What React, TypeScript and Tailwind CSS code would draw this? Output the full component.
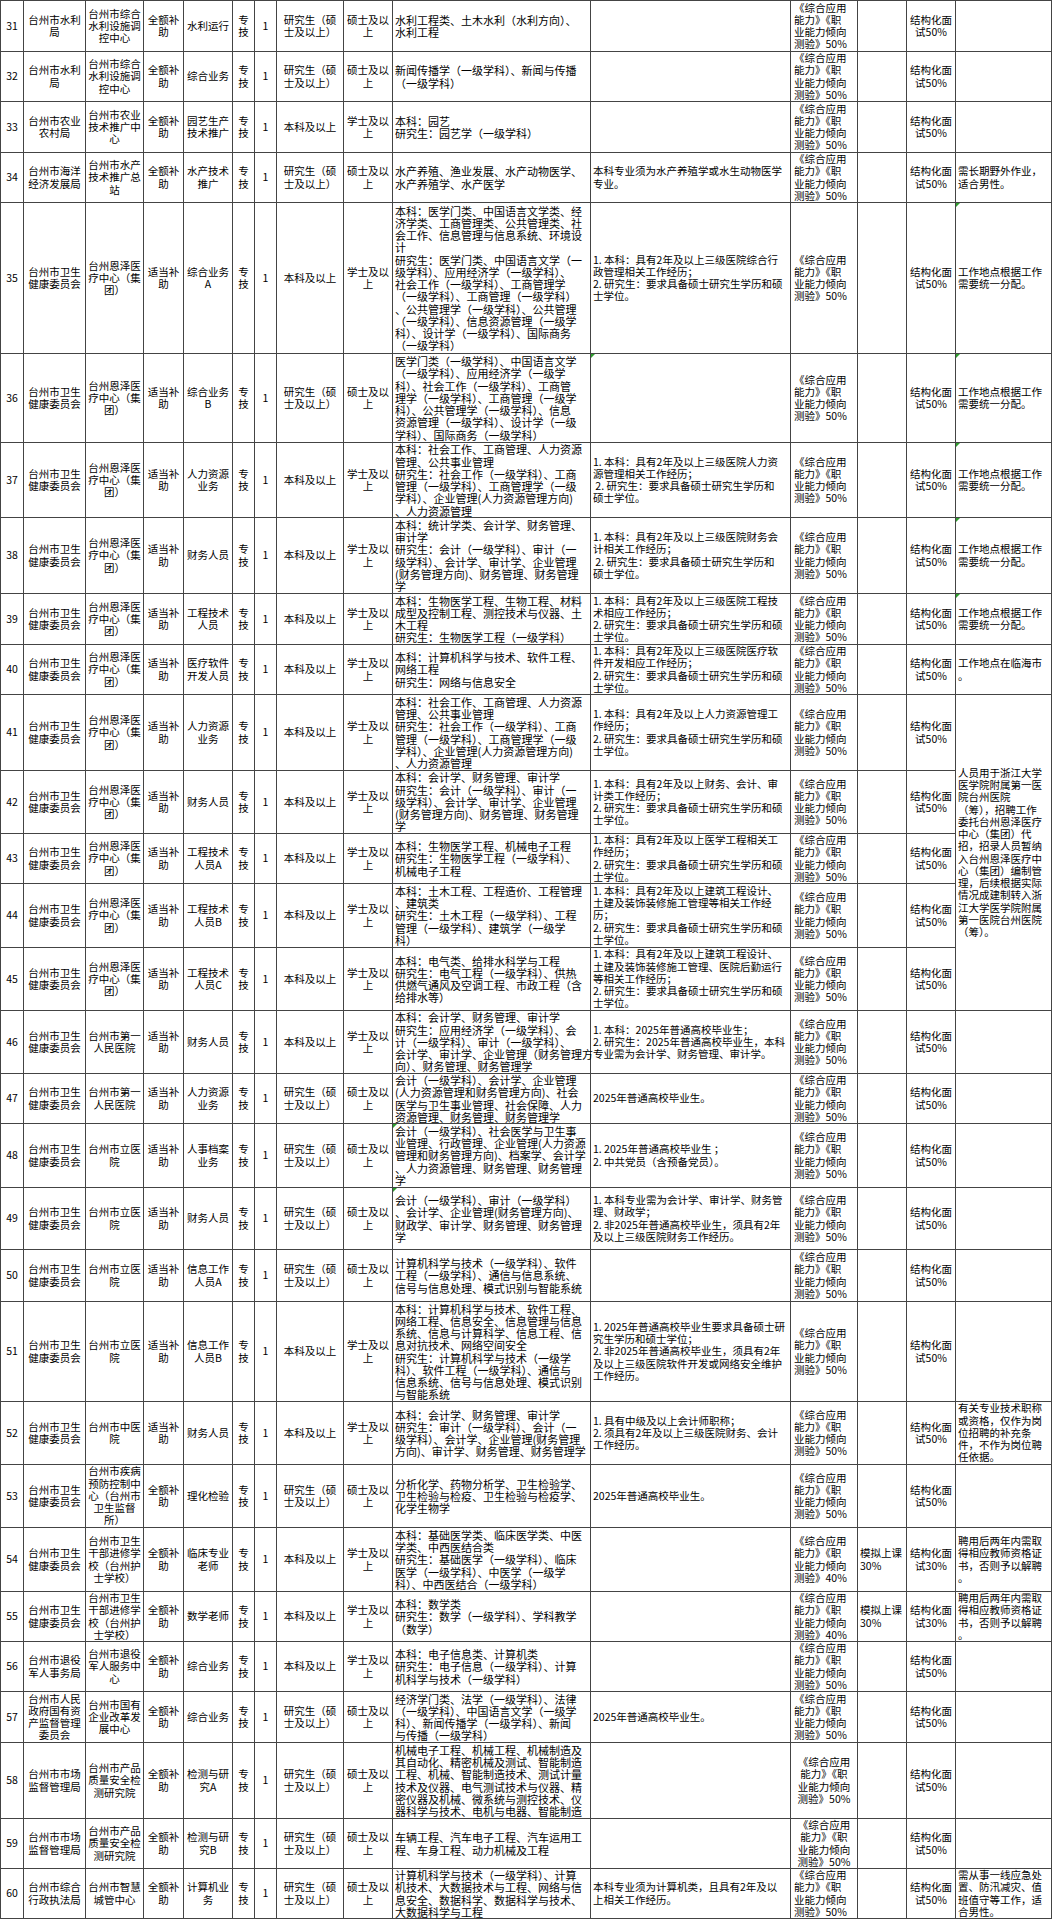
import React from 'react';

type Row = {
  n: number;
  dept: string;
  unit: string;
  fund: string;
  post: string;
  grad: boolean;
  major: string;
  cond?: string;
  exam?: string;
  examCenter?: boolean;
  sim?: string;
  interview?: string;
  note?: string;
  noteSpan?: boolean;
  skipNote?: boolean;
};

const WJ = '台州市卫生\n健康委员会';
const EZ = '台州恩泽医\n疗中心（集\n团）';
const LY = '台州市立医\n院';
const DY = '台州市第一\n人民医院';
const NURSE = '台州市卫生\n干部进修学\n校（台州护\n士学校）';
const PQ = '台州市产品\n质量安全检\n测研究院';
const SC = '台州市市场\n监督管理局';
const FULL = '全额补\n助';
const PART = '适当补\n助';
const WORK = '工作地点根据工作\n需要统一分配。';
const GRAD = '2025年普通高校毕业生。';
const TEACH = '聘用后两年内需取\n得相应教师资格证\n书，否则予以解聘\n。';
const EXAM50 = '《综合应用\n能力》《职\n业能力倾向\n测验》50%';
const EXAM40 = '《综合应用\n能力》《职\n业能力倾向\n测验》40%';
const HR_MAJOR =
  '本科：社会工作、工商管理、人力资源\n管理、公共事业管理\n研究生：社会工作（一级学科）、工商\n管理（一级学科）、工商管理学（一级\n学科）、企业管理(人力资源管理方向)\n、人力资源管理';

const rows: Row[] = [
  { n: 31, dept: '台州市水利\n局', unit: '台州市综合\n水利设施调\n控中心', fund: FULL, post: '水利运行', grad: true, major: '水利工程类、土木水利（水利方向）、\n水利工程' },
  { n: 32, dept: '台州市水利\n局', unit: '台州市综合\n水利设施调\n控中心', fund: FULL, post: '综合业务', grad: true, major: '新闻传播学（一级学科）、新闻与传播\n（一级学科）' },
  { n: 33, dept: '台州市农业\n农村局', unit: '台州市农业\n技术推广中\n心', fund: FULL, post: '园艺生产\n技术推广', grad: false, major: '本科：园艺\n研究生：园艺学（一级学科）' },
  {
    n: 34, dept: '台州市海洋\n经济发展局', unit: '台州市水产\n技术推广总\n站', fund: FULL, post: '水产技术\n推广', grad: true,
    major: '水产养殖、渔业发展、水产动物医学、\n水产养殖学、水产医学',
    cond: '本科专业须为水产养殖学或水生动物医学\n专业。',
    note: '需长期野外作业，\n适合男性。',
  },
  {
    n: 35, dept: WJ, unit: EZ, fund: PART, post: '综合业务\nA', grad: false,
    major:
      '本科：医学门类、中国语言文学类、经\n济学类、工商管理类、公共管理类、社\n会工作、信息管理与信息系统、环境设\n计\n研究生：医学门类、中国语言文学（一\n级学科）、应用经济学（一级学科）、\n社会工作（一级学科）、工商管理学\n（一级学科）、工商管理（一级学科）\n、公共管理学（一级学科）、公共管理\n（一级学科）、信息资源管理（一级学\n科）、设计学（一级学科）、国际商务\n（一级学科）',
    cond: '1. 本科：具有2年及以上三级医院综合行\n政管理相关工作经历；\n2. 研究生：要求具备硕士研究生学历和硕\n士学位。',
    note: WORK,
  },
  {
    n: 36, dept: WJ, unit: EZ, fund: PART, post: '综合业务\nB', grad: true,
    major:
      '医学门类（一级学科）、中国语言文学\n（一级学科）、应用经济学（一级学\n科）、社会工作（一级学科）、工商管\n理学（一级学科）、工商管理（一级学\n科）、公共管理学（一级学科）、信息\n资源管理（一级学科）、设计学（一级\n学科）、国际商务（一级学科）',
    note: WORK,
  },
  {
    n: 37, dept: WJ, unit: EZ, fund: PART, post: '人力资源\n业务', grad: false, major: HR_MAJOR,
    cond: '1. 本科：具有2年及以上三级医院人力资\n源管理相关工作经历；\n 2. 研究生：要求具备硕士研究生学历和\n硕士学位。',
    note: WORK,
  },
  {
    n: 38, dept: WJ, unit: EZ, fund: PART, post: '财务人员', grad: false,
    major: '本科：统计学类、会计学、财务管理、\n审计学\n研究生：会计（一级学科）、审计（一\n级学科）、会计学、审计学、企业管理\n(财务管理方向)、财务管理、财务管理\n学',
    cond: '1. 本科：具有2年及以上三级医院财务会\n计相关工作经历；\n 2. 研究生：要求具备硕士研究生学历和\n硕士学位。',
    note: WORK,
  },
  {
    n: 39, dept: WJ, unit: EZ, fund: PART, post: '工程技术\n人员', grad: false,
    major: '本科：生物医学工程、生物工程、材料\n成型及控制工程、测控技术与仪器、土\n木工程\n研究生：生物医学工程（一级学科）',
    cond: '1. 本科：具有2年及以上三级医院工程技\n术相应工作经历；\n2. 研究生：要求具备硕士研究生学历和硕\n士学位。',
    note: WORK,
  },
  {
    n: 40, dept: WJ, unit: EZ, fund: PART, post: '医疗软件\n开发人员', grad: false,
    major: '本科：计算机科学与技术、软件工程、\n网络工程\n研究生：网络与信息安全',
    cond: '1. 本科：具有2年及以上三级医院医疗软\n件开发相应工作经历；\n2. 研究生：要求具备硕士研究生学历和硕\n士学位。',
    note: '工作地点在临海市\n。',
  },
  {
    n: 41, dept: WJ, unit: EZ, fund: PART, post: '人力资源\n业务', grad: false, major: HR_MAJOR,
    cond: '1. 本科：具有2年及以上人力资源管理工\n作经历；\n2. 研究生：要求具备硕士研究生学历和硕\n士学位。',
    note:
      '人员用于浙江大学\n医学院附属第一医\n院台州医院\n（筹），招聘工作\n委托台州恩泽医疗\n中心（集团）代\n招，招录人员暂纳\n入台州恩泽医疗中\n心（集团）编制管\n理，后续根据实际\n情况成建制转入浙\n江大学医学院附属\n第一医院台州医院\n（筹）。',
    noteSpan: true,
  },
  {
    n: 42, dept: WJ, unit: EZ, fund: PART, post: '财务人员', grad: false,
    major: '本科：会计学、财务管理、审计学\n研究生：会计（一级学科）、审计（一\n级学科）、会计学、审计学、企业管理\n(财务管理方向)、财务管理、财务管理\n学',
    cond: '1. 本科：具有2年及以上财务、会计、审\n计类工作经历；\n2. 研究生：要求具备硕士研究生学历和硕\n士学位。',
    skipNote: true,
  },
  {
    n: 43, dept: WJ, unit: EZ, fund: PART, post: '工程技术\n人员A', grad: false,
    major: '本科：生物医学工程、机械电子工程\n研究生：生物医学工程（一级学科）、\n机械电子工程',
    cond: '1. 本科：具有2年及以上医学工程相关工\n作经历；\n2. 研究生：要求具备硕士研究生学历和硕\n士学位。',
    skipNote: true,
  },
  {
    n: 44, dept: WJ, unit: EZ, fund: PART, post: '工程技术\n人员B', grad: false,
    major: '本科：土木工程、工程造价、工程管理\n、建筑类\n研究生：土木工程（一级学科）、工程\n管理（一级学科）、建筑学（一级学\n科）',
    cond: '1. 本科：具有2年及以上建筑工程设计、\n土建及装饰装修施工管理等相关工作经\n历；\n2. 研究生：要求具备硕士研究生学历和硕\n士学位。',
    skipNote: true,
  },
  {
    n: 45, dept: WJ, unit: EZ, fund: PART, post: '工程技术\n人员C', grad: false,
    major: '本科：电气类、给排水科学与工程\n研究生：电气工程（一级学科）、供热\n供燃气通风及空调工程、市政工程（含\n给排水等）',
    cond: '1. 本科：具有2年及以上建筑工程设计、\n土建及装饰装修施工管理、医院后勤运行\n等相关工作经历；\n2. 研究生：要求具备硕士研究生学历和硕\n士学位。',
    skipNote: true,
  },
  {
    n: 46, dept: WJ, unit: DY, fund: PART, post: '财务人员', grad: false,
    major: '本科：会计学、财务管理、审计学\n研究生：应用经济学（一级学科）、会\n计（一级学科）、审计（一级学科）、\n会计学、审计学、企业管理（财务管理方\n向）、财务管理、财务管理学',
    cond: '1. 本科：2025年普通高校毕业生；\n2. 研究生：2025年普通高校毕业生，本科\n专业需为会计学、财务管理、审计学。',
  },
  {
    n: 47, dept: WJ, unit: DY, fund: PART, post: '人力资源\n业务', grad: true,
    major: '会计（一级学科）、会计学、企业管理\n(人力资源管理和财务管理方向)、社会\n医学与卫生事业管理、社会保障、人力\n资源管理、财务管理、财务管理学',
    cond: GRAD,
  },
  {
    n: 48, dept: WJ, unit: LY, fund: PART, post: '人事档案\n业务', grad: true,
    major: '会计（一级学科）、社会医学与卫生事\n业管理、行政管理、企业管理(人力资源\n管理和财务管理方向)、档案学、会计学\n、人力资源管理、财务管理、财务管理\n学',
    cond: '1. 2025年普通高校毕业生 ；\n2. 中共党员（含预备党员）。',
  },
  {
    n: 49, dept: WJ, unit: LY, fund: PART, post: '财务人员', grad: true,
    major: '会计（一级学科）、审计（一级学科）\n、会计学、企业管理(财务管理方向)、\n财政学、审计学、财务管理、财务管理\n学',
    cond: '1. 本科专业需为会计学、审计学、财务管\n理、财政学；\n2. 非2025年普通高校毕业生，须具有2年\n及以上三级医院财务工作经历。',
  },
  {
    n: 50, dept: WJ, unit: LY, fund: PART, post: '信息工作\n人员A', grad: true,
    major: '计算机科学与技术（一级学科）、软件\n工程（一级学科）、通信与信息系统、\n信号与信息处理、模式识别与智能系统',
  },
  {
    n: 51, dept: WJ, unit: LY, fund: PART, post: '信息工作\n人员B', grad: false,
    major: '本科：计算机科学与技术、软件工程、\n网络工程、信息安全、信息管理与信息\n系统、信息与计算科学、信息工程、信\n息对抗技术、网络空间安全\n研究生：计算机科学与技术（一级学\n科）、软件工程（一级学科）、通信与\n信息系统、信号与信息处理、模式识别\n与智能系统',
    cond: '1. 2025年普通高校毕业生要求具备硕士研\n究生学历和硕士学位；\n2. 非2025年普通高校毕业生，须具有2年\n及以上三级医院软件开发或网络安全维护\n工作经历。',
  },
  {
    n: 52, dept: WJ, unit: '台州市中医\n院', fund: PART, post: '财务人员', grad: false,
    major: '本科：会计学、财务管理、审计学\n研究生：审计（一级学科）、会计（一\n级学科）、会计学、企业管理(财务管理\n方向)、审计学、财务管理、财务管理学',
    cond: '1. 具有中级及以上会计师职称；\n2. 须具有2年及以上三级医院财务、会计\n工作经历。',
    note: '有关专业技术职称\n或资格，仅作为岗\n位招聘的补充条\n件，不作为岗位聘\n任依据。',
  },
  {
    n: 53, dept: WJ, unit: '台州市疾病\n预防控制中\n心（台州市\n卫生监督\n所）', fund: FULL, post: '理化检验', grad: true,
    major: '分析化学、药物分析学、卫生检验学、\n卫生检验与检疫、卫生检验与检疫学、\n化学生物学',
    cond: GRAD,
  },
  {
    n: 54, dept: WJ, unit: NURSE, fund: FULL, post: '临床专业\n老师', grad: false,
    major: '本科：基础医学类、临床医学类、中医\n学类、中西医结合类\n研究生：基础医学（一级学科）、临床\n医学（一级学科）、中医学（一级学\n科）、中西医结合（一级学科）',
    exam: EXAM40, sim: '模拟上课\n30%', interview: '结构化面\n试30%', note: TEACH,
  },
  {
    n: 55, dept: WJ, unit: NURSE, fund: FULL, post: '数学老师', grad: false,
    major: '本科：数学类\n研究生：数学（一级学科）、学科教学\n（数学）',
    exam: EXAM40, sim: '模拟上课\n30%', interview: '结构化面\n试30%', note: TEACH,
  },
  {
    n: 56, dept: '台州市退役\n军人事务局', unit: '台州市退役\n军人服务中\n心', fund: FULL, post: '综合业务', grad: false,
    major: '本科：电子信息类、计算机类\n研究生：电子信息（一级学科）、计算\n机科学与技术（一级学科）',
  },
  {
    n: 57, dept: '台州市人民\n政府国有资\n产监督管理\n委员会', unit: '台州市国有\n企业改革发\n展中心', fund: FULL, post: '综合业务', grad: true,
    major: '经济学门类、法学（一级学科）、法律\n（一级学科）、中国语言文学（一级学\n科）、新闻传播学（一级学科）、新闻\n与传播（一级学科）',
    cond: GRAD,
  },
  {
    n: 58, dept: SC, unit: PQ, fund: FULL, post: '检测与研\n究A', grad: true,
    major: '机械电子工程、机械工程、机械制造及\n其自动化、精密机械及测试、智能制造\n工程、机械、智能制造技术、测试计量\n技术及仪器、电气测试技术与仪器、精\n密仪器及机械、微系统与测控技术、仪\n器科学与技术、电机与电器、智能制造',
    examCenter: true,
  },
  {
    n: 59, dept: SC, unit: PQ, fund: FULL, post: '检测与研\n究B', grad: true,
    major: '车辆工程、汽车电子工程、汽车运用工\n程、车身工程、动力机械及工程',
    examCenter: true,
  },
  {
    n: 60, dept: '台州市综合\n行政执法局', unit: '台州市智慧\n城管中心', fund: FULL, post: '计算机业\n务', grad: true,
    major: '计算机科学与技术（一级学科）、计算\n机技术、大数据技术与工程、网络与信\n息安全、数据科学、数据科学与技术、\n大数据科学与工程',
    cond: '本科专业须为计算机类，且具有2年及以\n上相关工作经历。',
    note: '需从事一线应急处\n置、防汛减灾、值\n班值守等工作，适\n合男性。',
  },
];

// little green comment corners, row-column
const marks = new Set(['35-14', '36-10', '36-14', '37-14', '38-14', '39-14', '48-9', '49-9']);

function Cell({
  text,
  left,
  pad = 'pl-[2px]',
  big,
  mark,
  span,
}: {
  text?: string;
  left?: boolean;
  pad?: string;
  big?: boolean;
  mark?: boolean;
  span?: boolean;
}) {
  return (
    <div
      className={
        'relative flex min-h-0 min-w-0 border-r border-b border-[#444] ' +
        (span ? 'row-span-5 ' : '') +
        (left ? 'justify-start text-left' : 'justify-center text-center')
      }
    >
      {mark && (
        <span className="absolute left-0 top-0 h-0 w-0 border-t-[4px] border-r-[4px] border-t-[#2e9d2e] border-r-transparent" />
      )}
      {text && (
        <div
          className={
            'whitespace-pre ' +
            (big ? 'text-[11px] ' : 'text-[10.5px] ') +
            (left ? 'my-auto ' + pad : 'm-auto')
          }
        >
          {text}
        </div>
      )}
    </div>
  );
}

export default function App() {
  return (
    <div className="min-h-[1920px] bg-white">
      <div className="grid w-[1052px] grid-cols-[23px_62px_58px_40px_49px_22px_22px_67px_49px_198px_200px_67px_49px_49px_96px] grid-rows-[51px_50px_51px_50px_151px_89px_75px_76px_51px_50px_76px_63px_50px_64px_63px_63px_50px_64px_62px_52px_100px_63px_63px_64px_50px_50px_51px_76px_50px_50px] border-l border-t border-[#444] font-['Noto_Sans_CJK_SC',sans-serif] leading-[12.25px] text-black">
        {rows.map((r) => (
          <React.Fragment key={r.n}>
            <Cell text={String(r.n)} />
            <Cell text={r.dept} />
            <Cell text={r.unit} />
            <Cell text={r.fund} />
            <Cell text={r.post} />
            <Cell text={'专\n技'} />
            <Cell text="1" />
            <Cell text={r.grad ? '研究生（硕\n士及以上）' : '本科及以上'} />
            <Cell text={r.grad ? '硕士及以\n上' : '学士及以\n上'} />
            <Cell text={r.major} left big mark={marks.has(r.n + '-9')} />
            <Cell text={r.cond} left mark={marks.has(r.n + '-10')} />
            {r.examCenter ? (
              <Cell text={r.exam ?? EXAM50} />
            ) : (
              <Cell text={r.exam ?? EXAM50} left pad="pl-[3px]" />
            )}
            <Cell text={r.sim} left />
            <Cell text={r.interview ?? '结构化面\n试50%'} />
            {!r.skipNote && (
              <Cell text={r.note} left span={r.noteSpan} mark={marks.has(r.n + '-14')} />
            )}
          </React.Fragment>
        ))}
      </div>
    </div>
  );
}
